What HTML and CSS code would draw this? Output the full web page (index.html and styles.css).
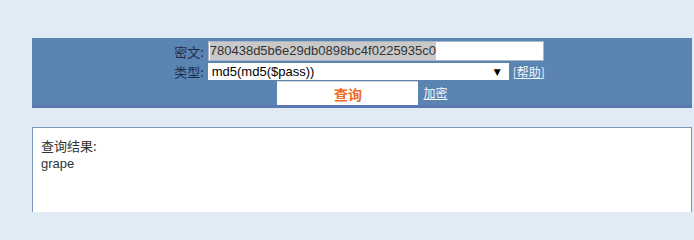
FILE: index.html
```html
<!DOCTYPE html>
<html>
<head>
<meta charset="utf-8">
<link rel="stylesheet" href="styles.css">
</head>
<body>
<div class="wrap">
  <div class="bar">
    <div class="form">
      <span class="label">密文:</span>
      <div class="field"><span class="sel">780438d5b6e29db0898bc4f0225935c0</span></div>
      <span class="label">类型:</span>
      <div class="typerow">
        <div class="select"><span>md5(md5($pass))</span><span class="arrow">▼</span></div>
        <a class="link" href="#">[帮助]</a>
      </div>
    </div>
    <div class="actions">
      <button class="btn">查询</button>
      <a class="link" href="#">加密</a>
    </div>
  </div>
  <div class="sep"></div>
  <div class="result">
    <div>查询结果:</div>
    <div class="en">grape</div>
  </div>
</div>
</body>
</html>
```
FILE: styles.css
```css
html, body {
  margin: 0;
  padding: 0;
  background: #e0ebf5;
  height: 100%;
  overflow: hidden;
}
.wrap {
  margin-left: 32px;
  width: 660px;
  padding-top: 38px;
  font-family: "Noto Sans CJK SC", "Liberation Sans", sans-serif;
}
.bar {
  background: #5a85b3;
  border-bottom: 3px solid #5a79b2;
  height: 64px;
  box-sizing: content-box;
  padding-top: 3px;
  overflow: hidden;
}
.form {
  display: grid;
  grid-template-columns: auto auto;
  justify-content: center;
  align-items: center;
  column-gap: 4px;
  row-gap: 2px;
  margin-left: -5px;
}
.label {
  font-size: 13px;
  color: #1e2c4a;
  text-align: right;
  line-height: 17px;
  white-space: nowrap;
}
.field {
  width: 336px;
  height: 20px;
  box-sizing: border-box;
  background: #fff;
  border: 1px solid #a9b8c8;
  padding: 0 1px;
  font-family: "Liberation Sans", Arial, sans-serif;
  font-size: 13px;
  line-height: 18px;
  color: #333;
  overflow: hidden;
  white-space: nowrap;
}
.sel {
  background: #c9c9c9;
  display: inline-block;
  height: 18px;
}
.typerow {
  display: flex;
  align-items: center;
  gap: 4px;
  height: 17px;
}
.select {
  width: 301px;
  height: 17px;
  box-sizing: border-box;
  background: #fff;
  display: flex;
  justify-content: space-between;
  align-items: center;
  padding: 0 8px 0 4px;
  font-family: "Liberation Sans", Arial, sans-serif;
  font-size: 13px;
  color: #000;
}
.arrow {
  font-size: 9px;
  font-family: "DejaVu Sans", sans-serif;
}
.link {
  color: #f3f6fb;
  font-size: 12px;
  text-decoration: underline;
  line-height: 14px;
  white-space: nowrap;
}
.actions {
  display: flex;
  justify-content: center;
  align-items: center;
  gap: 5px;
  margin-top: 1px;
  margin-left: 1px;
}
.btn {
  width: 141px;
  height: 24px;
  background: #fff;
  border: 0;
  border-top: 1px solid #d4d4d4;
  color: #f26a1f;
  font-weight: bold;
  font-size: 14px;
  font-family: "Noto Sans CJK SC", sans-serif;
  padding: 0;
  line-height: 22px;
}
.sep {
  height: 19px;
}
.result {
  background: #fff;
  border: 1px solid #7c97b8;
  border-bottom: 0;
  height: 66px;
  padding: 9px 8px;
  font-size: 13px;
  line-height: 17px;
  color: #333;
}
.en {
  font-family: "Liberation Sans", Arial, sans-serif;
  margin-top: 1px;
}
```
